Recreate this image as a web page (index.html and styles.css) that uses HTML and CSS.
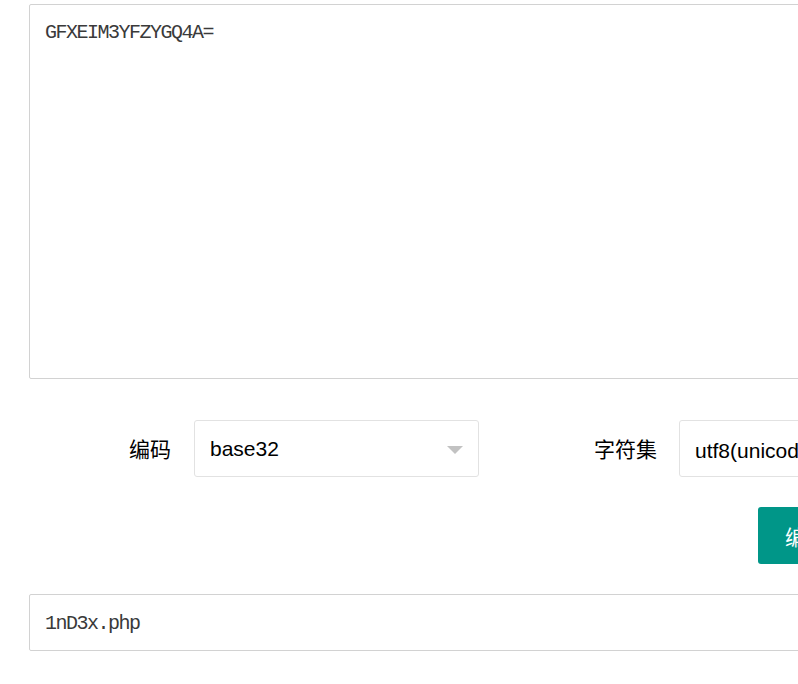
FILE: index.html
```html
<!DOCTYPE html>
<html lang="zh-CN">
<head>
<meta charset="utf-8">
<title>编码</title>
<link rel="stylesheet" href="styles.css">
</head>
<body>
<div class="page">
  <div class="textbox source">GFXEIM3YFZYGQ4A=</div>
  <div class="form-row">
    <label class="label first">编码</label>
    <div class="select">
      <span class="value">base32</span>
      <span class="caret"></span>
    </div>
    <label class="label second">字符集</label>
    <div class="select">
      <span class="value">utf8(unicode编码)</span>
      <span class="caret"></span>
    </div>
  </div>
  <div class="actions">
    <button class="btn">编码</button>
    <button class="btn">解码</button>
  </div>
  <div class="textbox result">1nD3x.php</div>
</div>
</body>
</html>
```
FILE: styles.css
```css
html, body {
  margin: 0;
  padding: 0;
  overflow: hidden;
  background: #fff;
}
.page {
  width: 1200px;
  padding: 4px 0 0 29px;
  font-family: "Liberation Sans", "Noto Sans CJK SC", sans-serif;
  color: #000;
}
.textbox {
  box-sizing: border-box;
  width: 1100px;
  border: 1px solid #d2d2d2;
  border-radius: 2px;
  padding: 0 15px;
  font-family: "Liberation Mono", "Noto Sans CJK SC", monospace;
  font-size: 20px;
  letter-spacing: -1.5px;
  color: #3a3a3a;
}
.source {
  height: 375px;
  padding-top: 12px;
  line-height: 31px;
}
.result {
  height: 57px;
  margin-top: 30px;
  line-height: 58px;
}
.form-row {
  display: flex;
  align-items: center;
  margin-top: 41px;
  height: 57px;
}
.label {
  box-sizing: border-box;
  text-align: right;
  font-family: "Noto Sans CJK SC", sans-serif;
  font-size: 21px;
  line-height: 57px;
}
.label.first {
  width: 165px;
  padding-right: 23px;
}
.label.second {
  width: 200px;
  padding-right: 22px;
}
.select {
  box-sizing: border-box;
  width: 285px;
  height: 57px;
  border: 1px solid #e2e2e2;
  border-radius: 3px;
  display: flex;
  align-items: center;
  justify-content: space-between;
  padding: 0 15px 0 15px;
  font-size: 21px;
  white-space: nowrap;
  overflow: hidden;
}
.caret {
  width: 0;
  height: 0;
  border-left: 8px solid transparent;
  border-right: 8px solid transparent;
  border-top: 8px solid #c2c2c2;
  margin-top: 2px;
}
.actions {
  display: flex;
  gap: 12px;
  margin-top: 30px;
  padding-left: 729px;
}
.btn {
  height: 57px;
  border: none;
  border-radius: 3px;
  background: #009688;
  color: #fff;
  padding: 0 27px;
  font-family: "Noto Sans CJK SC", sans-serif;
  font-size: 21px;
}
```
